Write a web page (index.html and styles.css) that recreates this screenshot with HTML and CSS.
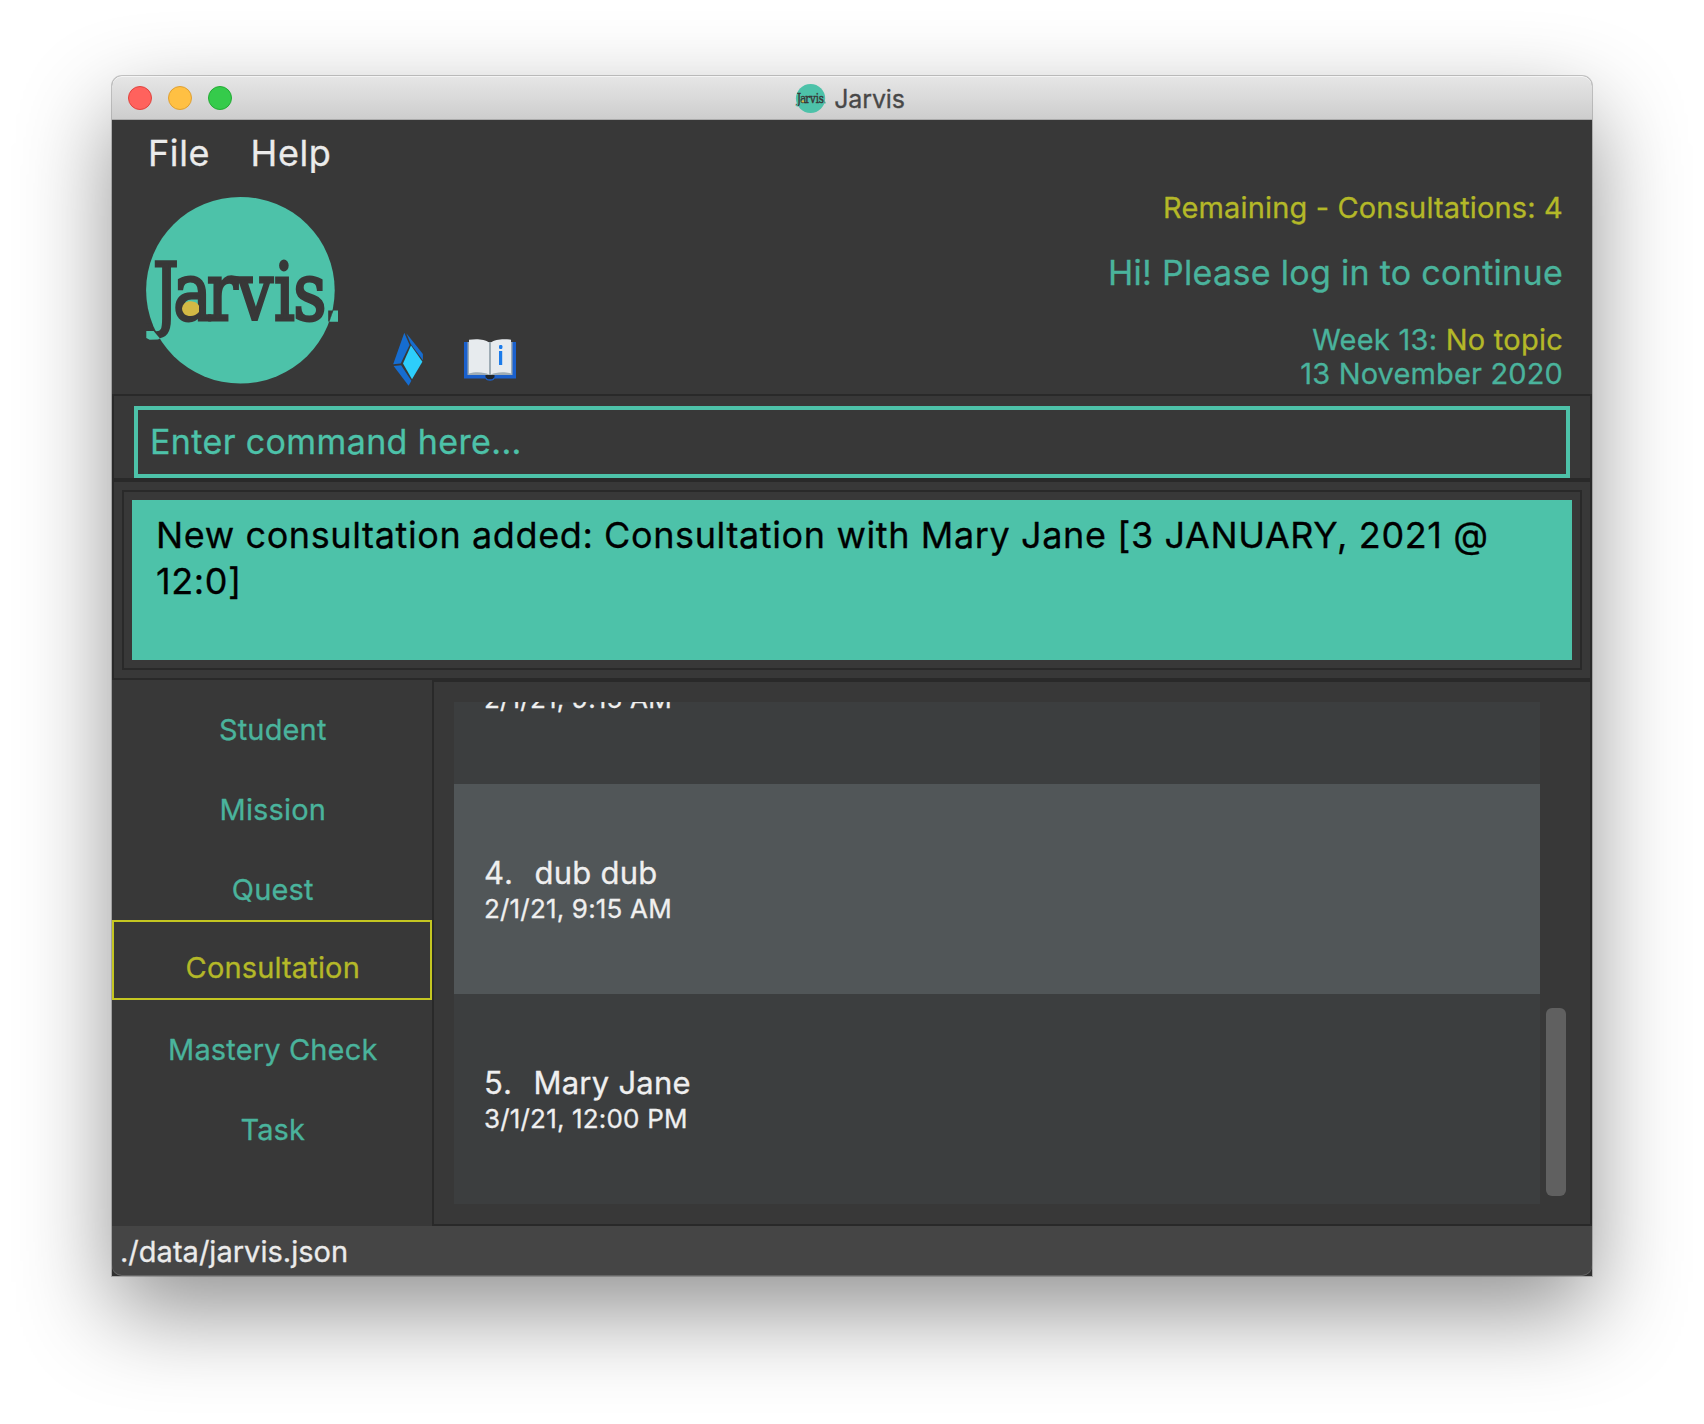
FILE: index.html
```html
<!DOCTYPE html>
<html lang="en">
<head>
<meta charset="utf-8">
<title>Jarvis</title>
<link rel="stylesheet" href="styles.css">
</head>
<body>
<div class="window">
  <header class="titlebar">
    <div class="lights"><span class="light close"></span><span class="light minimize"></span><span class="light maximize"></span></div>
    <div class="window-title">
      <svg class="title-icon" viewBox="140 190 200 200">
        <use href="#jarvis-logo"/>
      </svg>
      <span>Jarvis</span>
    </div>
  </header>

  <nav class="menubar"><span>File</span><span>Help</span></nav>

  <section class="banner">
    <svg class="logo" viewBox="140 190 205 200">
      <g id="jarvis-logo">
        <ellipse cx="240.4" cy="290.2" rx="94.3" ry="93.3" fill="#4dc2a9"/>
        <g transform="translate(0 320.2) scale(.8 1)">
          <text class="logo-text" y="0" x="190.8 216.5 258.5 295.5 342.5 366.5">Jarvis</text>
        </g>
        <path d="M182 308.5c1-5 4-7.300 9-7.200 4 .2 6.500 2 8 4.200v6.500c-2.500 2.800-5 4-8.500 4-5 0-8-2.500-8.500-7.500z" fill="#d3b945"/>
        <path d="M146.3 331h7.400l2 2.400 4.300 5-2 1.200-8.400.2-3.300-1.800z" fill="#4dc2a9"/>
        <path d="M328.200 310.400h4.600l-3.400 11.200h-1.200z" fill="#383838"/>
        <path d="M333.400 310.400h4.600v11.300h-8.600z" fill="#4dc2a9"/>
      </g>
    </svg>
    <svg class="gem" viewBox="390 330 36 58">
      <path d="M404.3 332.8l5.3 12.2-8.9 18.4-7.5.8z" fill="#166dd0"/>
      <path d="M406.3 333.2l16.6 20.8v6.3l-12.1-16.4z" fill="#166dd0"/>
      <path d="M411 345.5l11.4 16.2-10.4 17.5-9-15.8z" fill="#2dcefb"/>
      <path d="M393.6 366l7.5-.8 10.3 15.6-2.8 5z" fill="#166dd0"/>
    </svg>
    <svg class="book" viewBox="462 336 56 48">
      <path d="M464 342h52v36.500h-21.500c-.8 3-8 3-9 0H464z" fill="#1a60cc"/>
      <path d="M467.500 342h45v33h-45z" fill="#9eacb5"/>
      <path d="M485.500 375h9v2.200l-2.300 2h-4.400l-2.300-2z" fill="#20262b"/>
      <path d="M469 339.700c6-1 16-1 20 2.800v32c-4-2.500-14-3.300-20-1z" fill="#e7ebee"/>
      <path d="M511 339.700c-6-1-16-1-20 2.800v32c4-2.500 14-3.300 20-1z" fill="#e7ebee"/>
      <path d="M489 342.500h2v32h-2z" fill="#9eacb5"/>
      <rect x="499" y="345" width="3.400" height="4" rx="1.200" fill="#1b7bea"/>
      <rect x="499" y="351" width="3.200" height="14" fill="#1b7bea"/>
    </svg>
    <div class="summary">
      <div class="accent">Remaining - Consultations: 4</div>
      <div class="greeting">Hi! Please log in to continue</div>
      <div class="week">Week 13: <span class="accent">No topic</span></div>
      <div class="date">13 November 2020</div>
    </div>
  </section>

  <section class="command"><div class="command-field">Enter command here...</div></section>

  <section class="result">
    <div class="result-frame">
      <div class="result-text">New consultation added: Consultation with Mary Jane [3 JANUARY, 2021 @ 12:0]</div>
    </div>
  </section>

  <main class="main">
    <nav class="tabs">
      <div class="tab">Student</div>
      <div class="tab">Mission</div>
      <div class="tab">Quest</div>
      <div class="tab active">Consultation</div>
      <div class="tab">Mastery Check</div>
      <div class="tab">Task</div>
    </nav>
    <section class="panel">
      <div class="list">
        <article class="row scrolled"><div class="time">2/1/21, 9:15 AM</div></article>
        <article class="row alt"><div class="name"><span class="index">4.</span>dub dub</div><div class="time">2/1/21, 9:15 AM</div></article>
        <article class="row"><div class="name"><span class="index">5.</span>Mary Jane</div><div class="time">3/1/21, 12:00 PM</div></article>
      </div>
      <div class="scrollbar"><div class="thumb"></div></div>
    </section>
  </main>

  <footer class="status"><div class="status-text">./data/jarvis.json</div></footer>
</div>
</body>
</html>
```
FILE: styles.css
```css
* { box-sizing: border-box; }

body {
  margin: 0;
  padding: 76px 112px 0;
  height: 1424px;
  overflow: hidden;
  background: #fff;
  font: 29px Inter, "Liberation Sans", sans-serif;
  letter-spacing: .15px;
  color: #4ab39c;
  -webkit-text-stroke: .3px currentColor;
}

.window {
  width: 1480px;
  height: 1200px;
  display: flex;
  flex-direction: column;
  background: #383838;
  border-radius: 10px 10px 0 0;
  box-shadow: 0 0 0 1px rgba(0, 0, 0, .2), 0 36px 92px rgba(0, 0, 0, .43);
}

.titlebar {
  height: 44px;
  display: grid;
  grid-template-columns: 1fr auto 1fr;
  grid-template-rows: 44px;
  align-items: center;
  padding-left: 16px;
  padding-right: 20px;
  background: linear-gradient(#e6e6e6, #cdcdcd);
  border-radius: 10px 10px 0 0;
  box-shadow: inset 0 1px #f4f4f4, inset 0 -1px #ababab;
}

.lights { display: flex; gap: 16px; }
.light { width: 24px; height: 24px; border-radius: 50%; border: 1px solid; }
.close { background: #ff625d; border-color: #e0443f; }
.minimize { background: #ffc043; border-color: #dfa033; }
.maximize { background: #35cb4b; border-color: #24ab35; }

.window-title {
  display: flex;
  align-items: center;
  gap: 8px;
  font-size: 25px;
  line-height: 42px;
  letter-spacing: -.15px;
  color: #484848;
}
.window-title span { padding-top: 2px; }
.title-icon { width: 31px; height: 31px; }

.menubar {
  height: 66px;
  display: flex;
  gap: 40.5px;
  padding-left: 36px;
  font-size: 36px;
  line-height: 66px;
  letter-spacing: .6px;
  color: #ebebeb;
}

.banner {
  height: 208px;
  display: flex;
  align-items: flex-start;
  padding: 4px 29px 0 28px;
}
.logo { width: 205px; height: 200px; }
.logo-text {
  font: 81px "DejaVu Serif", serif;
  letter-spacing: 0;
  fill: #383838;
  stroke: #383838;
  stroke-width: 3px;
}
.gem { width: 36px; height: 58px; margin: 140px 36px 0 45px; }
.book { width: 56px; height: 48px; margin-top: 146px; }

.summary {
  margin-left: auto;
  padding-top: 1px;
  line-height: 34px;
  text-align: right;
}
.accent { color: #b4b828; }
.greeting { margin: 25px 0 27px; font-size: 34px; line-height: 46px; letter-spacing: .3px; }
.week { letter-spacing: .25px; }

.command {
  height: 86px;
  padding: 10px 20px 0;
  border: 2px solid #292929;
}
.command-field {
  height: 72px;
  padding-left: 12px;
  border: 4px solid #4dc2a9;
  font-size: 34px;
  line-height: 64px;
  letter-spacing: .38px;
  color: #4dc2a9;
}

.result { height: 200px; padding: 8px; border: 2px solid #292929; }
.result-frame { height: 180px; padding: 8px; border: 2px solid #292929; }
.result-text {
  height: 160px;
  padding: 11.5px 24px 0 24px;
  background: #4dc2a9;
  color: #000;
  font-size: 36px;
  line-height: 46px;
  letter-spacing: .61px;
}

.main { height: 546px; display: flex; }
.tabs { width: 320px; text-align: center; line-height: 60px; }
.tab { height: 80px; padding: 19.5px 0 0 1.5px; }
.tab.active { padding-top: 15.5px; border: 2px solid #c4c621; color: #b4b828; }

.panel {
  flex: 1;
  display: flex;
  gap: 6px;
  padding: 20px 24px 20px 20px;
  border: 2px solid #292929;
}
.list {
  flex: 1;
  height: 502px;
  display: flex;
  flex-direction: column;
  justify-content: flex-end;
  overflow: hidden;
}
.row {
  flex: none;
  height: 210px;
  padding: 71px 30px 0;
  background: #3c3e3f;
  line-height: 36px;
  color: #efefef;
}
.row.alt { background: #515658; }
.row.scrolled { padding-top: 107px; }
.name { font-size: 31px; letter-spacing: .25px; }
.index { margin-right: 20.5px; letter-spacing: 1px; }
.time { font-size: 26px; letter-spacing: .18px; }

.scrollbar { width: 20px; display: flex; align-items: flex-end; padding-bottom: 8px; }
.thumb { width: 20px; height: 188px; border-radius: 6px; background: #606060; }

.status { height: 50px; background: #303030; }
.status-text {
  height: 50px;
  padding: 1px 0 0 8px;
  background: #454545;
  border-radius: 0 0 10px 10px;
  box-shadow: inset 0 -1px #666;
  line-height: 50px;
  letter-spacing: .02px;
  color: #ebebeb;
}
```
